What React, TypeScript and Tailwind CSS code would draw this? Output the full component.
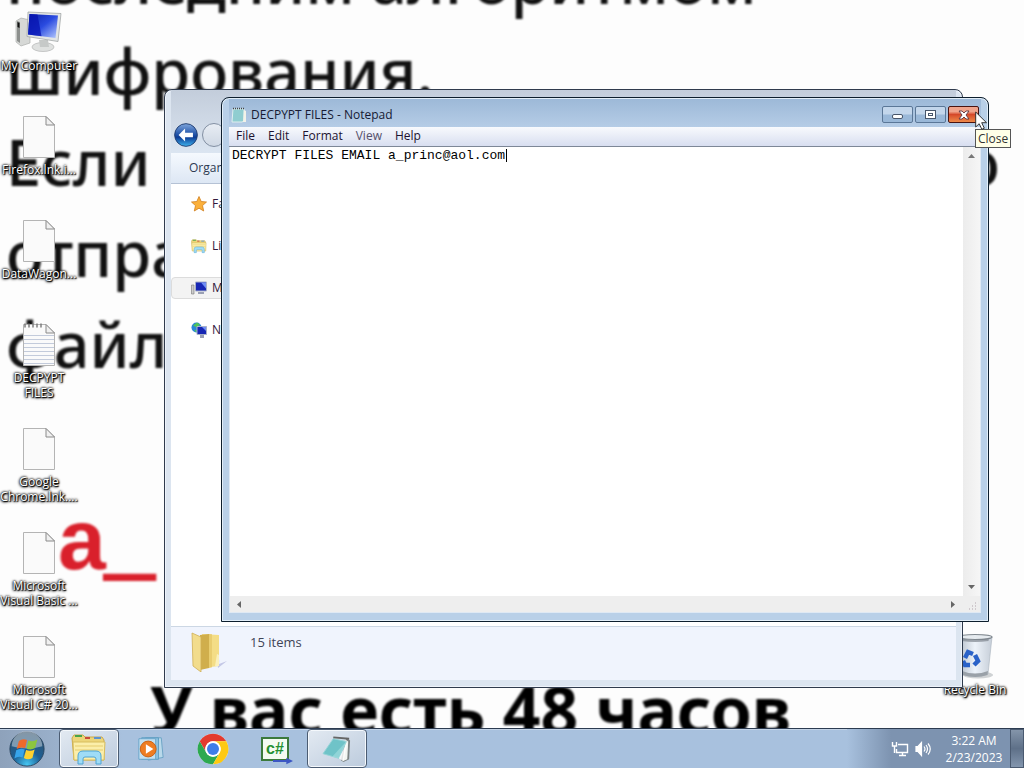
import { useState } from "react";
import type { ReactNode } from "react";

function ComputerIcon({ className }: { className?: string }) {
  return (
    <svg viewBox="0 0 48 48" className={className} aria-hidden="true">
      <defs>
        <linearGradient id="screen" x1="0" y1="0" x2="1" y2="1">
          <stop offset="0" stopColor="#0a1ea8" />
          <stop offset=".5" stopColor="#2a4be0" />
          <stop offset="1" stopColor="#b8ccff" />
        </linearGradient>
      </defs>
      <path d="M1 13l5-3 9 2v23l-9 3-5-4z" fill="#d6d8d6" stroke="#a3a5a3" strokeWidth=".6" />
      <path d="M2 13l3 1v21l-3-2z" fill="#8d908e" />
      <path d="M2.500 14l2 1v5l-2-1z" fill="#111" />
      <ellipse cx="28" cy="39" rx="11" ry="4.500" fill="#dfe1e0" stroke="#b3b5b4" strokeWidth=".7" />
      <path d="M24 32h9l1 7h-9z" fill="#c6c9c8" />
      <path d="M13 4l33 1.500-3 28-31-5z" fill="#e2e5e6" stroke="#9a9d9e" strokeWidth=".7" />
      <path d="M14.500 6l28.500 1.500-2.500 22.500L13 26.500z" fill="url(#screen)" />
      <path d="M14.500 6l8 .5 4 21.800L13 26.500z" fill="#0713b0" opacity=".75" />
    </svg>
  );
}

function FileIcon({ lined }: { lined?: boolean }) {
  return (
    <svg viewBox="0 0 48 48" className="size-12" aria-hidden="true">
      <path d="M8.500 4.500H31l8.500 8.500v32.500h-31z" fill="#fafafa" stroke="#b4b4b4" />
      <path d="M31 4.500V13h8.500z" fill="#f0f0f0" stroke="#8a8a8a" />
      {lined && (
        <g>
          <path d="M9 15.500h30M9 19.500h30M9 23.500h30M9 27.500h30M9 31.500h30M9 35.500h30M9 39.500h30M9 43.500h30" stroke="#c3cbdb" />
          <path d="M10 4v3M14 4v3M18 4v3M22 4v3M26 4v3" stroke="#777" strokeWidth="1.400" strokeLinecap="round" />
        </g>
      )}
    </svg>
  );
}

function RecycleIcon() {
  return (
    <svg viewBox="0 0 48 48" className="size-12" aria-hidden="true">
      <defs>
        <linearGradient id="bin" x1="0" x2="1">
          <stop offset="0" stopColor="#b4bdc8" />
          <stop offset=".5" stopColor="#edf3fa" />
          <stop offset="1" stopColor="#c6ced8" />
        </linearGradient>
      </defs>
      <ellipse cx="27" cy="43" rx="15" ry="3.500" fill="#cfd2d4" />
      <path d="M7 5h34l-4 37q-13 5-26 0z" fill="url(#bin)" stroke="#aab3bd" strokeWidth=".6" />
      <path d="M11 39q13 5 26 0l-.5 4q-12 4-25 0z" fill="#9aa1a8" />
      <ellipse cx="24" cy="5" rx="17" ry="2.500" fill="#e6ebef" stroke="#7f878e" strokeWidth="1.200" />
      <path d="M10 6q14 4 28 0l-.5 3q-13 2-27 0z" fill="#7d858d" opacity=".7" />
      <g fill="none" stroke="#2a62c8" strokeWidth="4.500">
        <path d="M14 26l3-6 5 2" />
        <path d="M24 23l3 6-4 4" />
        <path d="M19 33h-5l-2-4" />
      </g>
    </svg>
  );
}

function FolderIcon({ className }: { className?: string }) {
  return (
    <svg viewBox="0 0 40 40" className={className} aria-hidden="true">
      <path d="M12 2l17 1v31l-17 2z" fill="#f4dd86" />
      <path d="M10 3l9-1v34l-9 2z" fill="#d0ae4c" />
      <path d="M19 2l3 .2v33l-3 .8z" fill="#e9cd70" />
      <path d="M2 1l9 4v35L3 34z" fill="#f2dc8c" stroke="#cfae55" strokeWidth=".8" />
      <path d="M27 24q3 2 2 8l8-3-9 7z" fill="#b9bde0" opacity=".8" />
      <path d="M27 22l2 1v11h-4z" fill="#fbf0bb" />
    </svg>
  );
}

function LibraryIcon({ className }: { className?: string }) {
  return (
    <svg viewBox="0 0 36 32" className={className} aria-hidden="true">
      <path d="M1 5l2-3h9l2 2h17l2 3v20H3z" fill="#ecd579" stroke="#c9a94c" />
      <path d="M4 2h7v2H4z" fill="#47a44a" />
      <path d="M14 4h5v2h-5z" fill="#c74b3a" />
      <path d="M23 4h7v2h-7z" fill="#5d93cf" />
      <path d="M2 9h32l-1 18H3z" fill="#fbeeaa" stroke="#d8bd5e" />
      <path d="M4 13h28M4 17h28" stroke="#e5cc6f" />
      <path d="M7 31v-8q0-5 5-5h13q5 0 5 5v8h-5v-5q0-2-2-2h-9q-2 0-2 2v5z" fill="#9fdcf6" stroke="#4ea4d4" />
    </svg>
  );
}

function SmallMonitor({ globe }: { globe?: boolean }) {
  return (
    <svg viewBox="0 0 16 16" className="size-4 shrink-0" aria-hidden="true">
      {globe ? (
        <g>
          <circle cx="5.500" cy="5.500" r="5" fill="#2a86d8" />
          <path d="M2 3.500l4-3 3 2-3 3zM3 7.500l3 1-1 2z" fill="#4fc45a" />
        </g>
      ) : (
        <path d="M.5 5h2.500v9H.5z" fill="#ccc" stroke="#777" strokeWidth=".6" />
      )}
      <path d={globe ? "M6 4.500h9.500v8H6z" : "M4.500 2h11v9h-11z"} fill="#1626b4" stroke="#a8b0c8" />
      <path d={globe ? "M11 5h4v4z" : "M10 2.500h5v6z"} fill="#6f8df5" />
      <path d={globe ? "M9 13h4v3H9z" : "M7 12h6v2H7z"} fill="#9aa0b4" />
    </svg>
  );
}

function WindowsOrb() {
  return (
    <svg viewBox="0 0 40 40" className="size-9" aria-hidden="true">
      <defs>
        <radialGradient id="orb" cx=".5" cy=".95" r=".9">
          <stop offset="0" stopColor="#45c6f2" />
          <stop offset=".45" stopColor="#1c5f95" />
          <stop offset="1" stopColor="#31536f" />
        </radialGradient>
      </defs>
      <circle cx="20" cy="20" r="19" fill="url(#orb)" stroke="#27435c" />
      <path d="M3 17a17 17 0 0 1 34 0q-17 5-34 0z" fill="#fff" opacity=".4" />
      <path d="M11 11q4-3 9-1l-2 9q-5-2-9.500 1z" fill="#ee6a2c" />
      <path d="M21.500 10.500q5 2 10-1l-2.500 9.500q-5 3-9.500.500z" fill="#8cc63f" />
      <path d="M8 21.500q4.500-3 9.500-1l-2.500 9q-4.500-2-9 1z" fill="#37a4ea" />
      <path d="M19 21q4.500 2 9.500-.5L26 30q-5 3-9.500 0z" fill="#fdd12f" />
    </svg>
  );
}

function MediaIcon() {
  return (
    <svg viewBox="0 0 30 30" className="size-7" aria-hidden="true">
      <path d="M9 3h17l2 21-16 3z" fill="#b9d9ea" stroke="#6ba3c4" />
      <path d="M5 3h18v23H5z" fill="#8fc4e2" stroke="#5a9bc1" />
      <path d="M2 4h18v22H2z" fill="#c3e0f0" stroke="#66a4c8" />
      <circle cx="12" cy="15" r="8.500" fill="#ee7d22" stroke="#c75f10" />
      <path d="M9.500 10v10l8-5z" fill="#fff" />
    </svg>
  );
}

function ChromeIcon() {
  return (
    <svg viewBox="0 0 48 48" className="size-8" aria-hidden="true">
      <circle cx="24" cy="24" r="23" fill="#fff" />
      <path d="M4.080 12.500A23 23 0 0 1 43.920 12.500H24A11.500 11.500 0 0 0 14.040 29.750z" fill="#e33b2e" />
      <path d="M4.080 12.500L14.040 29.750A11.500 11.500 0 0 0 33.960 29.750L24 47A23 23 0 0 1 4.080 12.500z" fill="#2da94f" />
      <path d="M43.920 12.500A23 23 0 0 1 24 47L33.960 29.750A11.500 11.500 0 0 0 24 12.500z" fill="#fdc913" />
      <circle cx="24" cy="24" r="11.500" fill="#fff" />
      <circle cx="24" cy="24" r="9" fill="#3f7de8" />
    </svg>
  );
}

function CSharpIcon() {
  return (
    <span className="relative block">
      <span className="block h-6 w-7 border-2 border-[#3c7a3c] bg-[#f4fbf2] text-center font-['Liberation_Sans'] text-base leading-5 font-bold text-[#259033]">
        c#
      </span>
      <svg viewBox="0 0 18 6" className="absolute -right-1 -bottom-1 h-2 w-5" aria-hidden="true">
        <path d="M0 2h12V0l6 3-6 3V4H0z" fill="#3c57c4" />
      </svg>
    </span>
  );
}

function NotebookIcon() {
  return (
    <svg viewBox="0 0 32 30" className="h-7 w-8" aria-hidden="true">
      <path d="M26 3l4 3-1 20-6 3-3-2z" fill="#7b8384" />
      <path d="M25 5l3 2-1 19-5 2z" fill="#f2f5f2" />
      <path d="M12 4l14 3-8 18-17-5z" fill="#6fc3c8" stroke="#94d3d6" />
      <path d="M26 7l-8 18-7-2z" fill="#a6dfe1" opacity=".6" />
      <path d="M12 2.500L29 4" stroke="#666" strokeWidth="2" />
      <path d="M18 25l5 3 4-20z" fill="#fff" opacity=".8" />
    </svg>
  );
}

function DesktopIcon({ label, children }: { label: string; children: ReactNode }) {
  return (
    <button className="flex h-[104px] w-[78px] flex-col items-center pt-2 text-xs leading-[15px] text-white [text-shadow:1px_1px_1px_#000,0_0_2px_#000,0_0_3px_#000,0_1px_3px_#000]">
      {children}
      <span className="block pt-[2px] text-center whitespace-pre">{label}</span>
    </button>
  );
}

const desktopFiles = [
  { label: "Firefox.lnk.i..." },
  { label: "DataWagon..." },
  { label: "DECPYPT\nFILES", lined: true },
  { label: "Google\nChrome.lnk...." },
  { label: "Microsoft\nVisual Basic ..." },
  { label: "Microsoft\nVisual C# 20..." },
];

function Wallpaper() {
  return (
    <div className="absolute inset-0 overflow-hidden bg-[#fdfdfd] font-['Noto_Sans',sans-serif] text-[63px] leading-[91px] whitespace-nowrap text-[#111] select-none" aria-hidden="true">
      <div className="-mt-[66px] pl-[6px] font-medium blur-[1px]">
        <p>последним алгоритмом</p>
        <p>шифрования.</p>
        <p className="flex w-[994px] justify-between"><span>Если</span><span>то</span></p>
        <p>отправ</p>
        <p>файлы</p>
        <p className="pt-[105px] pl-[52px] font-['Liberation_Sans'] text-[86px] font-bold text-[#d9202b]">
          a<span className="[-webkit-text-stroke:4px_#d9202b]">_</span>
        </p>
        <p className="pt-[79px] pl-[144px] text-[66px] font-bold text-black">У вас есть 48 часов</p>
      </div>
    </div>
  );
}

function Explorer() {
  return (
    <section aria-label="My Computer" className="absolute top-[89px] left-[164px] flex h-[599px] w-[799px] flex-col rounded-t-lg border border-[#303b4d] bg-[#dce5f0] px-[6px] pb-[7px] shadow-[inset_0_0_0_1px_#eef3fa]">
      <div className="flex h-[63px] items-end gap-1 bg-linear-to-b from-[#c3cddb] to-[#dbe5f1] pb-[6px] pl-[3px]">
        <button aria-label="Back" className="size-6 rounded-full">
          <svg viewBox="0 0 26 26" className="size-6" aria-hidden="true">
            <defs>
              <linearGradient id="back" x1="0" y1="0" x2="0" y2="1">
                <stop offset="0" stopColor="#7fa6dc" />
                <stop offset=".5" stopColor="#1c4fa6" />
                <stop offset=".6" stopColor="#0d3c95" />
                <stop offset="1" stopColor="#3fb4ee" />
              </linearGradient>
            </defs>
            <circle cx="13" cy="13" r="12.300" fill="url(#back)" stroke="#1e3c70" />
            <path d="M5 13l7-7v4.500h8.500v5H12V20z" fill="#fff" />
          </svg>
        </button>
        <button aria-label="Forward" className="size-6 rounded-full border border-[#8390a3] bg-linear-to-b from-[#e8edf4] to-[#cfd8e4]" />
      </div>
      <div className="flex h-[31px] items-center border-b border-[#b5c2d5] bg-linear-to-b from-[#f5f9fe] to-[#dde7f4] pl-[18px] text-xs text-[#2e3b52]">
        <button>Organize</button>
      </div>
      <nav className="flex flex-1 flex-col gap-[20px] bg-white pt-[9px] text-xs text-[#32183c]">
        <a href="#favorites" className="flex h-[22px] items-center gap-[5px] pl-5">
          <svg viewBox="0 0 16 16" className="size-4" aria-hidden="true">
            <path d="M8 .5l2.200 5 5.300.5-4 3.600 1.200 5.400L8 12.200 3.300 15l1.200-5.400-4-3.600 5.300-.5z" fill="#fbb03b" stroke="#d07f1e" strokeWidth=".8" />
          </svg>
          Favorites
        </a>
        <a href="#libraries" className="flex h-[22px] items-center gap-[5px] pl-5"><LibraryIcon className="size-4" />Libraries</a>
        <a href="#computer" className="flex h-[22px] items-center gap-[5px] rounded-sm border border-[#dcdcdc] bg-[#f3f3f3] pl-[19px]"><SmallMonitor />My Computer</a>
        <a href="#network" className="flex h-[22px] items-center gap-[5px] pl-5"><SmallMonitor globe />Network</a>
      </nav>
      <footer className="flex h-[54px] gap-5 border-t border-[#ccd7e4] bg-[#f0f4fd] pl-[19px]">
        <FolderIcon className="mt-[5px] size-10" />
        <span className="pt-[5px] text-[13px] leading-5 text-[#3f4557]">15 items</span>
      </footer>
    </section>
  );
}

function Notepad() {
  const [text, setText] = useState("DECRYPT FILES EMAIL a_princ@aol.com");
  return (
    <section aria-label="DECPYPT FILES - Notepad" className="absolute top-[97px] left-[221px] flex h-[525px] w-[768px] flex-col rounded-t-lg border border-[#0d1e2d] bg-[#b9d0e8] px-[7px] pb-2 shadow-[inset_0_0_0_1px_#e2eef8]">
      <header className="mt-px flex h-7 items-start bg-linear-to-b from-[#9db9d8] to-[#b5cce6] text-xs text-[#171a33]">
        <svg viewBox="0 0 16 16" className="mt-2 ml-[2px] size-4" aria-hidden="true">
          <path d="M2 2h11v12l-2 1H1z" fill="#8fcdd0" stroke="#dfeff0" />
          <path d="M13 3l2 1v11h-3z" fill="#f2f2e8" />
          <path d="M2 1.500h12" stroke="#444" strokeWidth="1.500" strokeDasharray="1 1" />
        </svg>
        <h1 className="mt-2 ml-1 flex-1 leading-4">DECPYPT FILES - Notepad</h1>
        <div className="mt-[7px] mr-[2px] flex gap-[2px]">
          <button aria-label="Minimize" className="flex h-[17px] w-[31px] items-center justify-center rounded-xs border border-[#5b7797] bg-linear-to-b from-[#c3d6eb] from-45% to-[#9ab8d8] to-55%">
            <span className="mt-1 h-[5px] w-[11px] rounded-xs border border-[#48566b] bg-white" />
          </button>
          <button aria-label="Maximize" className="flex h-[17px] w-[31px] items-center justify-center rounded-xs border border-[#5b7797] bg-linear-to-b from-[#c3d6eb] from-45% to-[#9ab8d8] to-55%">
            <span className="flex h-[9px] w-[11px] items-center justify-center border border-[#48566b] bg-white">
              <span className="h-[3px] w-[5px] border border-[#48566b]" />
            </span>
          </button>
          <button aria-label="Close" className="flex h-[17px] w-[31px] items-center justify-center rounded-xs border border-[#4a1410] bg-linear-to-b from-[#f0a48c] from-30% via-[#d5482a] via-50% to-[#ee8a4a]">
            <svg viewBox="0 0 12 10" className="h-[10px] w-3" aria-hidden="true">
              <path d="M1 1h3l2 2 2-2h3L8 5l3 4H8L6 7 4 9H1l3-4z" fill="#fff" stroke="#5b3340" strokeWidth=".9" />
            </svg>
          </button>
        </div>
      </header>
      <div role="menubar" className="flex h-5 items-center gap-[13px] border-b border-[#7d8797] bg-linear-to-b from-[#f8fafd] to-[#d8def0] pb-px pl-[7px] text-xs leading-4 text-[#1c1230]">
        <button>File</button>
        <button>Edit</button>
        <button>Format</button>
        <button className="text-[#55506a]">View</button>
        <button>Help</button>
      </div>
      <div className="flex min-h-0 flex-1 border-x border-[#dfe9f4] bg-white">
        <div className="relative min-w-0 flex-1">
          <textarea
            aria-label="Text"
            value={text}
            onChange={(e) => setText(e.target.value)}
            spellCheck={false}
            className="block size-full resize-none bg-transparent px-[2px] pt-px font-['Liberation_Mono',monospace] text-[13px] leading-4 text-black outline-none"
          />
          <span className="absolute top-[2px] left-[276px] h-[13px] w-px bg-black" />
        </div>
        <div className="flex w-[17px] flex-col items-center justify-between bg-linear-to-r from-[#ececec] to-[#f6f6f6] py-[7px]">
          <svg viewBox="0 0 7 4" className="h-1 w-[7px]" aria-hidden="true"><path d="M0 4l3.500-4L7 4z" fill="#777" /></svg>
          <svg viewBox="0 0 7 4" className="h-1 w-[7px]" aria-hidden="true"><path d="M0 0l3.500 4L7 0z" fill="#666" /></svg>
        </div>
      </div>
      <div className="flex h-[17px] items-center border-x border-b border-[#dfe9f4] bg-[#eeeeee] pl-[7px]">
        <svg viewBox="0 0 4 7" className="h-[7px] w-1" aria-hidden="true"><path d="M4 0L0 3.500 4 7z" fill="#666" /></svg>
        <span className="flex-1" />
        <svg viewBox="0 0 4 7" className="mr-[13px] h-[7px] w-1" aria-hidden="true"><path d="M0 0l4 3.500L0 7z" fill="#666" /></svg>
        <svg viewBox="0 0 9 9" className="mt-1 mr-[3px] size-[9px]" aria-hidden="true">
          <path d="M7 1h1M4 4h1M7 4h1M1 7h1M4 7h1M7 7h1" stroke="#b0a4ac" strokeWidth="1" />
        </svg>
      </div>
    </section>
  );
}

function TaskButton({ label, active, children }: { label: string; active?: boolean; children: ReactNode }) {
  return (
    <button
      aria-label={label}
      className={
        active
          ? "flex w-[60px] items-center justify-center rounded-sm border border-[#4b5c72] bg-linear-to-br from-[#e3eaf2] to-[#bccbdd] shadow-[inset_0_0_0_1px_#f4f8fc]"
          : "flex w-[60px] items-center justify-center"
      }
    >
      {children}
    </button>
  );
}

function Taskbar() {
  return (
    <footer className="absolute inset-x-0 bottom-0 flex h-10 border-t border-[#2c3b50] bg-linear-to-r from-[#8ea2bb] from-0% via-[#a8c1de] via-12% to-[#a8c1de] shadow-[inset_0_1px_0_#c3d3e6]">
      <button aria-label="Start" className="flex w-[59px] items-center pl-[9px]"><WindowsOrb /></button>
      <nav aria-label="Taskbar" className="flex flex-1 gap-[2px]">
        <TaskButton label="Windows Explorer" active><LibraryIcon className="h-8 w-9" /></TaskButton>
        <TaskButton label="Media Player"><MediaIcon /></TaskButton>
        <TaskButton label="Chrome"><ChromeIcon /></TaskButton>
        <TaskButton label="Visual C#"><CSharpIcon /></TaskButton>
        <TaskButton label="Notepad" active><NotebookIcon /></TaskButton>
      </nav>
      <div className="flex items-center bg-linear-to-r from-[#a8c1de] to-[#7d93b0] to-25% pl-[44px] text-xs text-white">
        <svg viewBox="0 0 18 16" className="h-4 w-[18px]" fill="none" stroke="#fff" strokeWidth="1.400" aria-hidden="true">
          <path d="M7 3.500h9.500v8H5.500V8M8 14.500h7M11.500 12v2M1.500 1v4h4V1M3.500 5v7" />
        </svg>
        <svg viewBox="0 0 18 16" className="ml-[5px] h-4 w-[18px]" fill="none" stroke="#fff" strokeWidth="1.200" aria-hidden="true">
          <path d="M2 5.500h2l3.500-4v13l-3.500-4H2z" fill="#fff" />
          <path d="M10 5.500q2 2.500 0 5M12 4q3 4 0 8M14 2.500q4.500 5.500 0 11" />
        </svg>
        <time className="ml-2 w-[68px] text-center leading-[17px]">3:22 AM<br />2/23/2023</time>
        <button aria-label="Show desktop" className="ml-[2px] h-full w-[14px] border border-[#4a5a70] bg-linear-to-b from-[#8495aa] via-[#5e7088] to-[#8396ae]" />
      </div>
    </footer>
  );
}

export default function App() {
  return (
    <main className="relative h-screen overflow-hidden font-['Open_Sans','Noto_Sans',sans-serif]">
      <Wallpaper />
      <div className="relative flex w-[78px] flex-col">
        <DesktopIcon label="My Computer"><ComputerIcon className="size-12" /></DesktopIcon>
        {desktopFiles.map((f) => (
          <DesktopIcon key={f.label} label={f.label}><FileIcon lined={f.lined} /></DesktopIcon>
        ))}
      </div>
      <div className="absolute top-[624px] right-[10px]">
        <DesktopIcon label="Recycle Bin"><RecycleIcon /></DesktopIcon>
      </div>
      <Explorer />
      <Notepad />
      <div role="tooltip" className="absolute top-[129px] left-[975px] border border-[#555] bg-[#ffffe7] px-[2px] text-xs leading-[17px] text-[#333]">Close</div>
      <svg viewBox="0 0 12 19" className="absolute top-[111px] left-[975px] h-[19px] w-3" aria-hidden="true">
        <path d="M.7 1v15l3.500-3.300 2.600 5.600 2.500-1.100-2.600-5.500h4.800z" fill="#fff" stroke="#222" strokeWidth=".9" />
      </svg>
      <Taskbar />
    </main>
  );
}
